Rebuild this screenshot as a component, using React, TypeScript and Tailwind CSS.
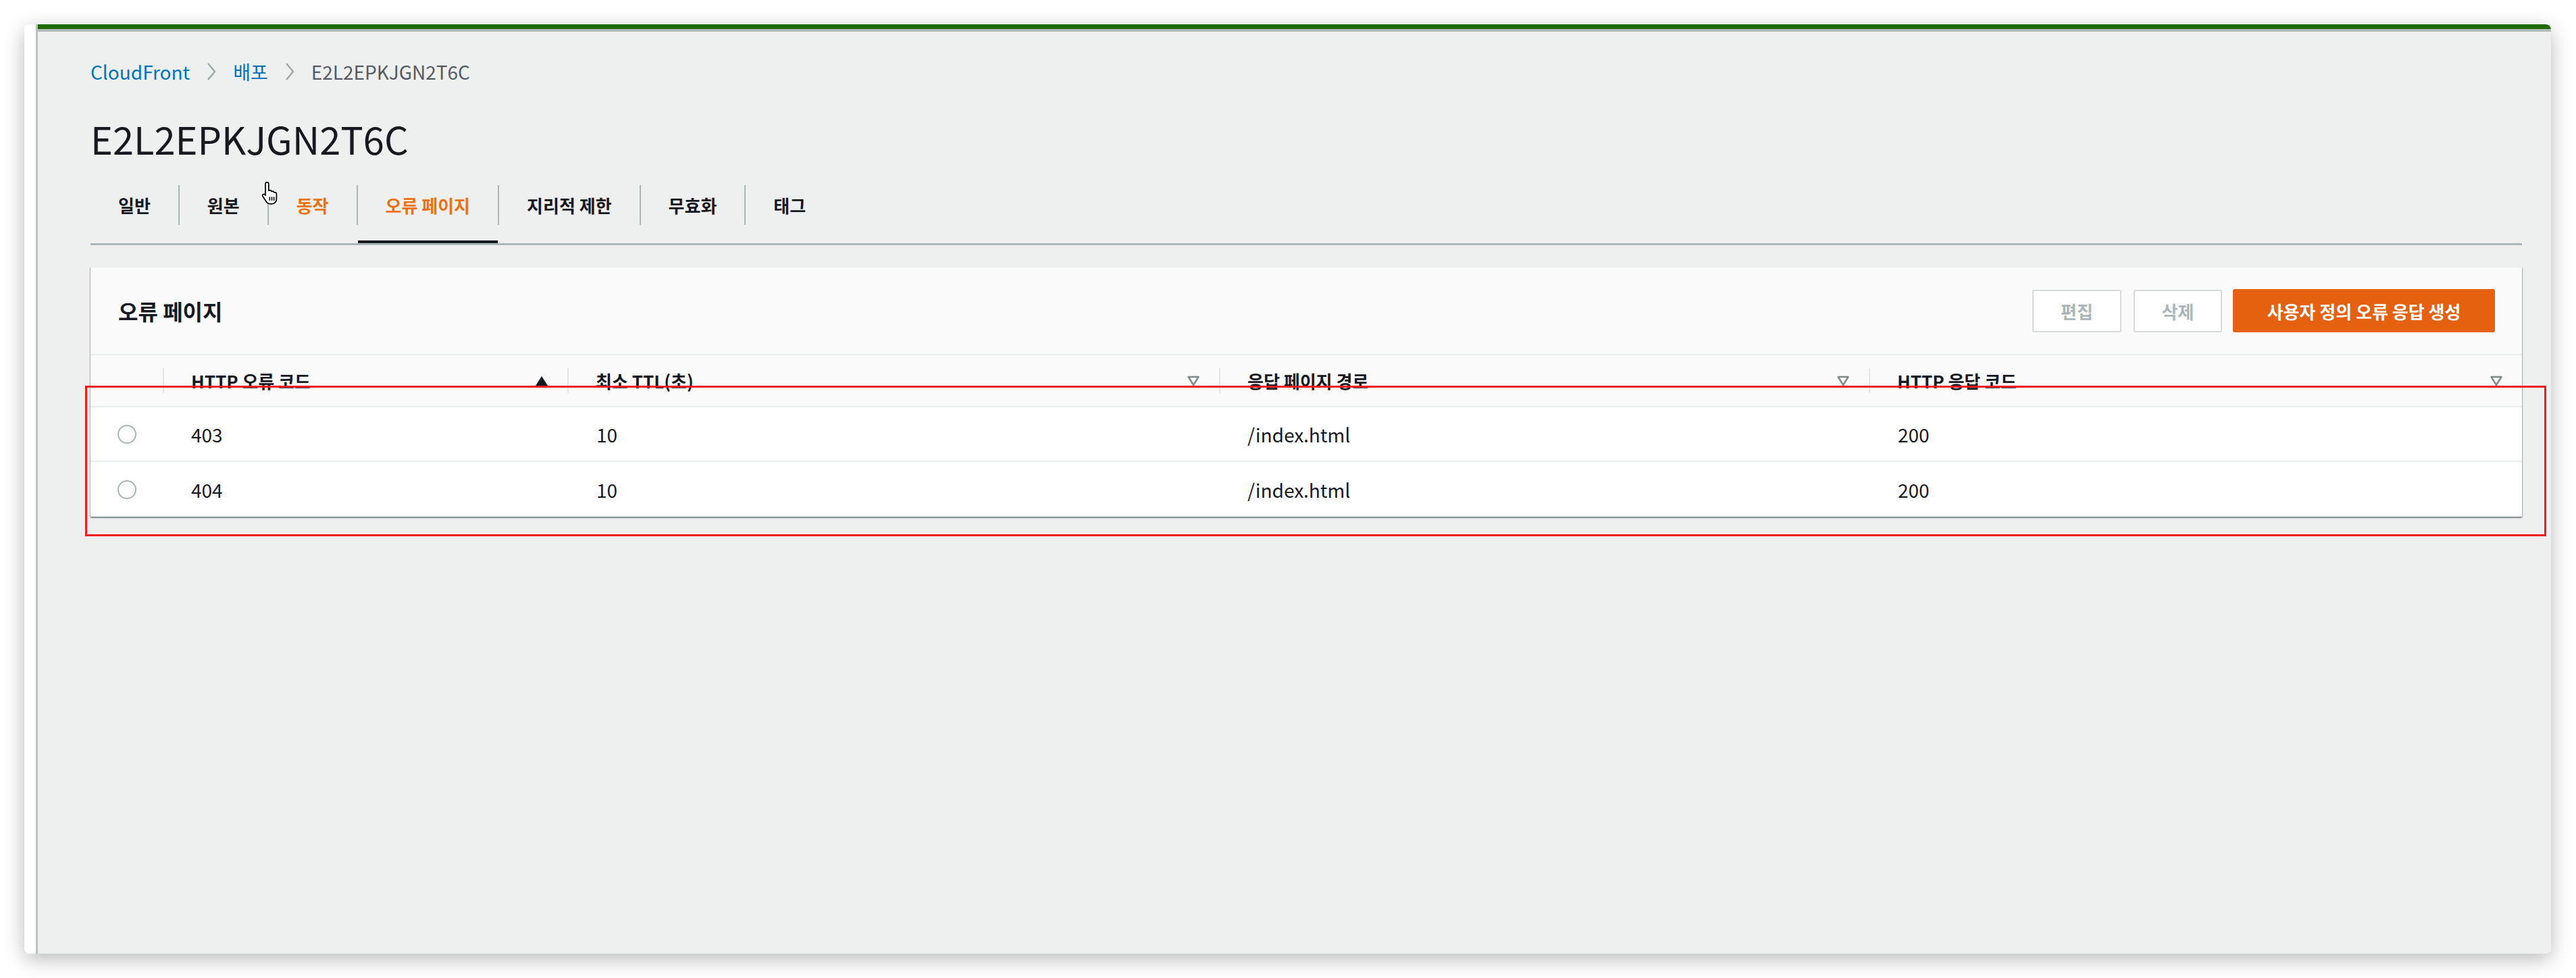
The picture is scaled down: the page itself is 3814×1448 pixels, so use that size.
import React from "react";

const tabs = [
  { label: "일반" },
  { label: "원본" },
  { label: "동작", hover: true },
  { label: "오류 페이지", active: true },
  { label: "지리적 제한" },
  { label: "무효화" },
  { label: "태그" },
];

const rows = [
  { code: "403", ttl: "10", path: "/index.html", resp: "200" },
  { code: "404", ttl: "10", path: "/index.html", resp: "200" },
];

const Chevron = () => (
  <svg width="16" height="28" viewBox="0 0 16 28" className="mx-[24px]">
    <path d="M3 2 L13 14 L3 26" fill="none" stroke="#9aa6a6" strokeWidth="2.4" />
  </svg>
);

const SortUp = () => (
  <svg width="20" height="16" viewBox="0 0 20 16">
    <path d="M10 1 L19 15 H1 Z" fill="#16191f" />
  </svg>
);

const SortNone = () => (
  <svg width="20" height="16" viewBox="0 0 20 16">
    <path d="M2.5 2 H17.5 L10 14 Z" fill="none" stroke="#7d8b8b" strokeWidth="2.4" strokeLinejoin="round" />
  </svg>
);

const HandCursor = () => (
  <svg width="32" height="36" viewBox="0 0 20 23">
    <path
      d="M7 1.2c1 0 1.6.7 1.6 1.6V9l1-.2c.8-.1 1.5.3 1.6 1l.9-.1c.8 0 1.4.4 1.5 1.1h.8c.9 0 1.6.6 1.6 1.5V17c0 2.5-1.8 4.6-4.3 4.6H10c-1.6 0-2.7-.7-3.6-2L3 14.6c-.5-.7-.3-1.6.4-2 .6-.4 1.4-.2 1.9.4l.2.5V2.8C5.5 1.9 6 1.2 7 1.2Z"
      fill="#fff"
      stroke="#000"
      strokeWidth="1.1"
      strokeLinejoin="round"
    />
    <path d="M9.6 15v3.6M11.6 15v3.6M13.6 15v3.6" stroke="#000" strokeWidth="1" />
  </svg>
);

const HeaderCell = ({ label, sorted }: { label: string; sorted?: boolean }) => (
  <div className="flex items-center h-full">
    <span className="w-[2px] h-[37px] bg-[#e1e5e5]" />
    <span className="pl-[40px] text-[26px] font-bold text-[#16191f]">{label}</span>
    <span className="ml-auto pr-[28px] flex items-center">{sorted ? <SortUp /> : <SortNone />}</span>
  </div>
);

export default function App() {
  return (
    <div className="relative w-[3814px] h-[1448px] bg-white pt-[36px] pl-[36px] font-['Noto_Sans_CJK_KR','Noto_Sans',sans-serif]">
      <div className="w-[3741px] h-[1376px] rounded-[8px] flex overflow-hidden shadow-[0_8px_30px_rgba(0,0,0,0.28)]">
        <div className="w-[20px] bg-white border-r-[3px] border-[#b9c1c0]" />
        <div className="flex-1 flex flex-col bg-[#eef0ef]">
          <div className="h-[7px] bg-[#1e6b05]" />
          <div className="h-[4px] bg-[#b3bdba]" />

          <main className="pl-[78px] pr-[43px]">
            {/* breadcrumb */}
            <div className="mt-[39px] h-[40px] flex items-center text-[28px]">
              <span className="text-[#0073bb]">CloudFront</span>
              <Chevron />
              <span className="text-[#0073bb]">배포</span>
              <Chevron />
              <span className="text-[#545b64]">E2L2EPKJGN2T6C</span>
            </div>

            <h1 className="mt-[47px] text-[56px] leading-[64px] text-[#16191f]">E2L2EPKJGN2T6C</h1>

            {/* tabs */}
            <div className="mt-[19px] flex items-start border-b-[3px] border-[#aab7b8]">
              {tabs.map((t, i) => (
                <React.Fragment key={t.label}>
                  {i > 0 && <span className="mt-[18px] w-[2px] h-[59px] bg-[#aab7b8]" />}
                  <div
                    className={
                      "h-[104px] px-[41px] pb-[6px] flex items-center text-[26px] font-bold border-b-4 " +
                      (t.active ? "border-[#16191f] " : "border-transparent ") +
                      (t.active || t.hover ? "text-[#ec7211]" : "text-[#16191f]")
                    }
                  >
                    {t.label}
                  </div>
                </React.Fragment>
              ))}
            </div>

            {/* container */}
            <section className="mt-[32px] bg-white border-t border-[#eaeded] shadow-[0_2px_2px_0_rgba(0,28,36,0.4),1px_1px_1px_0_rgba(0,28,36,0.15),-1px_1px_1px_0_rgba(0,28,36,0.15)]">
              <div className="h-[130px] bg-[#fafafa] border-b-2 border-[#eaeded] flex items-center pl-[41px] pr-[40px]">
                <h2 className="text-[32px] font-bold text-[#16191f]">오류 페이지</h2>
                <div className="ml-auto flex items-center">
                  <button className="w-[132px] h-[63px] bg-white border-2 border-[#d5dbdb] rounded-[3px] text-[26px] font-bold text-[#aab7b8]">
                    편집
                  </button>
                  <button className="ml-[18px] w-[131px] h-[63px] bg-white border-2 border-[#d5dbdb] rounded-[3px] text-[26px] font-bold text-[#aab7b8]">
                    삭제
                  </button>
                  <button className="ml-[16px] w-[388px] h-[64px] bg-[#e5600f] rounded-[3px] text-[26px] font-bold text-white">
                    사용자 정의 오류 응답 생성
                  </button>
                </div>
              </div>

              <div className="grid grid-cols-[107px_599px_965px_962px_1fr]">
                <div className="h-[77px] bg-[#fafafa] border-b-2 border-[#eaeded]" />
                <div className="h-[77px] bg-[#fafafa] border-b-2 border-[#eaeded]">
                  <HeaderCell label="HTTP 오류 코드" sorted />
                </div>
                <div className="h-[77px] bg-[#fafafa] border-b-2 border-[#eaeded]">
                  <HeaderCell label="최소 TTL(초)" />
                </div>
                <div className="h-[77px] bg-[#fafafa] border-b-2 border-[#eaeded]">
                  <HeaderCell label="응답 페이지 경로" />
                </div>
                <div className="h-[77px] bg-[#fafafa] border-b-2 border-[#eaeded]">
                  <HeaderCell label="HTTP 응답 코드" />
                </div>

                {rows.map((r, i) => {
                  const cell =
                    "h-[81px] flex items-center text-[28px] text-[#16191f] " +
                    (i < rows.length - 1 ? "border-b-2 border-[#eaeded]" : "");
                  return (
                    <React.Fragment key={r.code}>
                      <div className={cell + " justify-center"}>
                        <span className="w-[28px] h-[28px] rounded-full border-2 border-[#aab7b8] bg-white" />
                      </div>
                      <div className={cell + " pl-[42px]"}>{r.code}</div>
                      <div className={cell + " pl-[43px]"}>{r.ttl}</div>
                      <div className={cell + " pl-[42px]"}>{r.path}</div>
                      <div className={cell + " pl-[43px]"}>{r.resp}</div>
                    </React.Fragment>
                  );
                })}
              </div>
            </section>
          </main>
        </div>
      </div>

      {/* annotation box */}
      <div className="absolute left-[126px] top-[571px] w-[3644px] h-[223px] border-[3px] border-[#ee1c1c]" />

      {/* mouse cursor */}
      <div className="absolute left-[384px] top-[268px]">
        <HandCursor />
      </div>
    </div>
  );
}
